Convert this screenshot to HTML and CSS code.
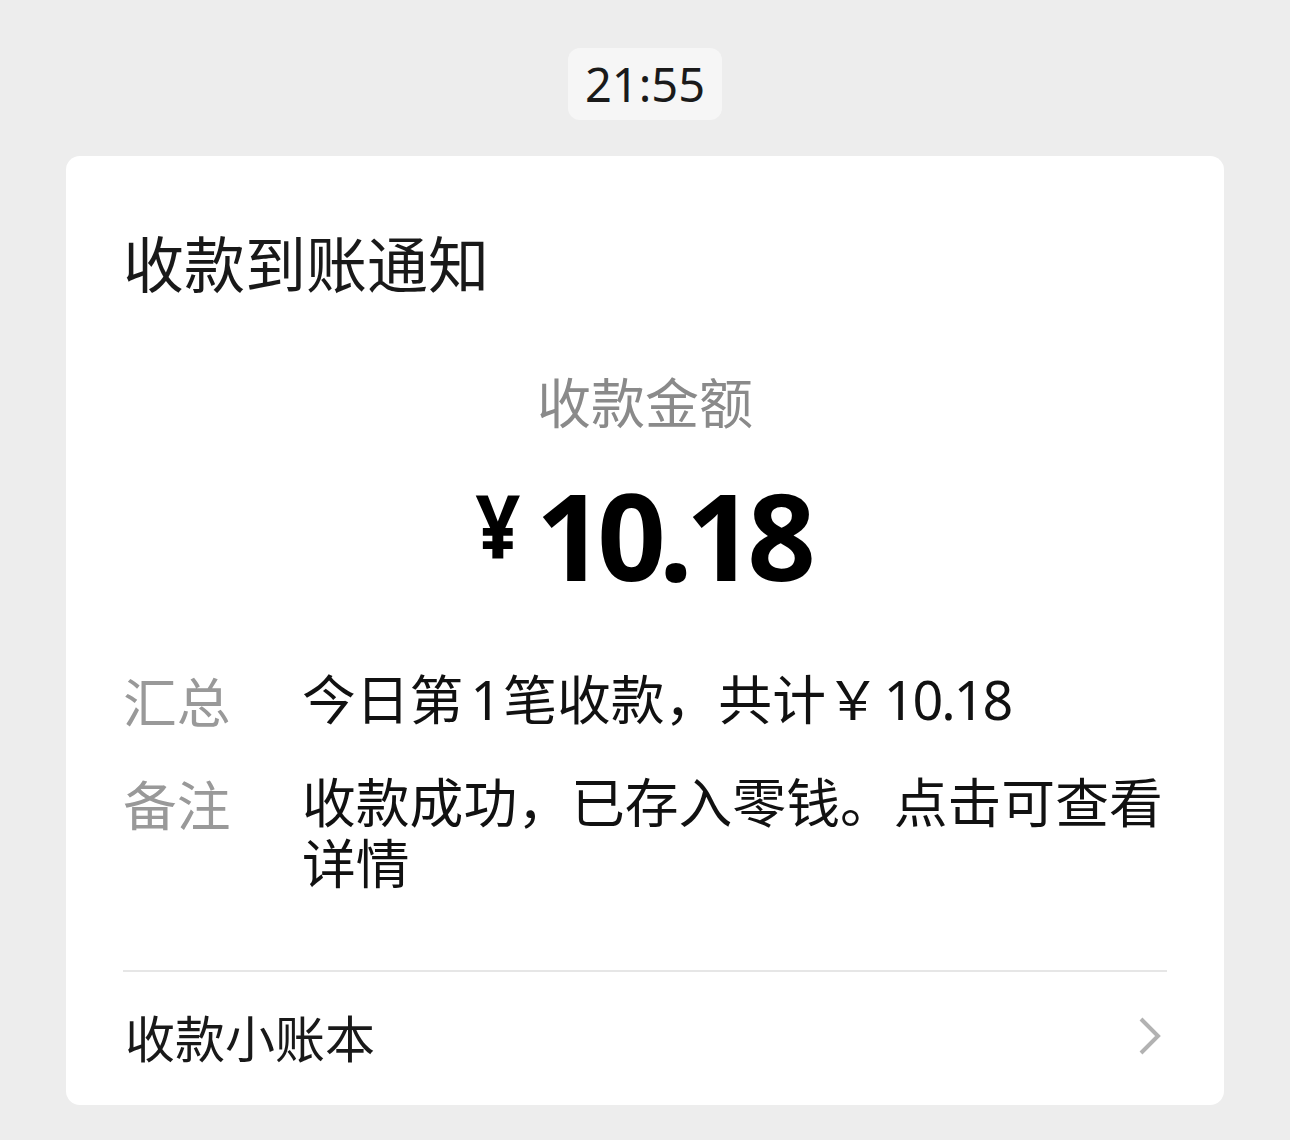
FILE: index.html
```html
<!DOCTYPE html>
<html lang="zh-CN">
    <head>
        <meta charset="utf-8"/>
        <title>收款到账通知</title>
        <link rel="stylesheet" href="styles.css">
    </head>
    <body>
        <!-- Time stamp -->
        <div class="time-row">
            <span class="time-pill">21:55</span>
        </div>

        <!-- Notification card -->
        <div class="card">
            <h1 class="card-title">收款到账通知</h1>

            <div class="amount-label">收款金额</div>
            <div class="amount">
                <span class="amount-sign">¥</span><span class="amount-num">10.18</span>
            </div>

            <div class="info-row">
                <div class="info-label">汇总</div>
                <div class="info-value">今日第<span class="count">1</span>笔收款，共计￥<span class="sum">10.18</span></div>
            </div>
            <div class="info-row">
                <div class="info-label">备注</div>
                <div class="info-value">收款成功，已存入零钱。点击可查看详情</div>
            </div>

            <div class="card-footer">
                <span>收款小账本</span>
                <svg class="chevron" width="24" height="40" viewBox="0 0 24 40">
                    <polyline points="3,3 20,20 3,37" fill="none" stroke="#b2b2b2" stroke-width="4"/>
                </svg>
            </div>
        </div>
    </body>
</html>
```

FILE: styles.css
```css
body {
    background-color: #ededed;
    margin: 0;
    font-family: "Noto Sans CJK SC", "Noto Sans", sans-serif;
    color: #191919;
}

.time-row {
    display: flex;
    justify-content: center;
    padding-top: 48px;
}

.time-pill {
    background-color: #f6f6f6;
    border-radius: 12px;
    height: 72px;
    line-height: 72px;
    padding: 0 17px;
    font-family: "Noto Sans", sans-serif;
    font-size: 47px;
    color: #1a1a1a;
}

.card {
    background-color: #fff;
    border-radius: 14px;
    margin: 36px 66px 0;
    padding: 70px 57px 0;
}

.card-title {
    margin: 0;
    font-size: 61px;
    font-weight: normal;
    line-height: 72px;
}

.amount-label {
    margin-top: 71px;
    text-align: center;
    font-size: 54px;
    line-height: 64px;
    color: #8a8a8a;
}

.amount {
    margin-top: 37px;
    padding-right: 8px;
    display: flex;
    justify-content: center;
    align-items: flex-start;
    height: 130px;
    color: #000;
    font-family: "Noto Sans", sans-serif;
    font-weight: bold;
}

.amount-sign {
    font-size: 87px;
    line-height: 130px;
    margin-top: -10px;
    margin-right: 13px;
    transform: scaleX(0.9);
}

.amount-num {
    font-size: 120px;
    line-height: 130px;
    letter-spacing: -7px;
}

.info-row {
    display: flex;
    font-size: 53.8px;
    line-height: 61px;
}

.info-row + .info-row {
    margin-top: 42px;
}

.amount + .info-row {
    margin-top: 69px;
}

.info-label {
    flex: 0 0 179px;
    color: #999;
}

.info-value {
    flex: 1;
    color: #111;
    font-family: "Noto Sans", "Noto Sans CJK SC", sans-serif;
}

.count {
    margin-left: 7px;
    margin-right: 2px;
}

.sum {
    margin-left: 4px;
    letter-spacing: -2px;
}

.card-footer {
    margin-top: 76px;
    border-top: 2px solid #e6e6e6;
    display: flex;
    justify-content: space-between;
    align-items: center;
    padding: 33px 0 38px 2px;
    font-size: 50px;
    line-height: 62px;
}

.chevron {
    margin-right: 5px;
}
```
